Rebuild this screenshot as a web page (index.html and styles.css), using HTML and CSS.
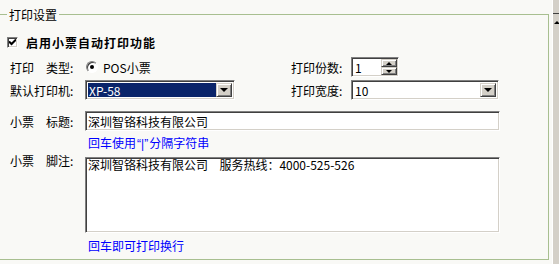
FILE: index.html
```html
<!DOCTYPE html>
<html lang="zh-CN">
<head>
  <meta charset="UTF-8">
  <meta name="viewport" content="width=device-width, initial-scale=1.0">
  <title>打印设置</title>
  <link rel="stylesheet" href="styles.css">
</head>
<body>

<div class="window">
  <fieldset class="group">
    <legend>打印设置</legend>

    <label class="check-row">
      <span class="checkbox">
        <svg width="7" height="7" viewBox="0 0 7 7"><path d="M0 2.5 L2.5 5 L7 0.5" fill="none" stroke="#000" stroke-width="2"/></svg>
      </span>
      启用小票自动打印功能
    </label>

    <div class="row row-type">
      <span class="lbl">打印&emsp;类型:</span>
      <div class="col-left">
        <span class="radio"></span>
        <span class="radio-text">POS小票</span>
      </div>
      <span class="lbl-r">打印份数:</span>
      <div class="spin sunken">
        <span class="spin-value">1</span>
        <div class="spin-btns">
          <span class="btn3d spin-btn"><i class="tri-up"></i></span>
          <span class="btn3d spin-btn"><i class="tri-down small"></i></span>
        </div>
      </div>
    </div>

    <div class="row row-printer">
      <span class="lbl">默认打印机:</span>
      <div class="col-left">
        <div class="combo combo-left sunken">
          <span class="combo-value selected">XP-58</span>
          <span class="btn3d combo-btn"><i class="tri-down"></i></span>
        </div>
      </div>
      <span class="lbl-r">打印宽度:</span>
      <div class="combo combo-right sunken">
        <span class="combo-value">10</span>
        <span class="btn3d combo-btn"><i class="tri-down"></i></span>
      </div>
    </div>

    <div class="row row-title">
      <span class="lbl">小票&emsp;标题:</span>
      <input class="text-input sunken" type="text" value="深圳智铬科技有限公司">
    </div>
    <div class="hint">回车使用<span class="quote">“|”</span>分隔字符串</div>

    <div class="row row-footer">
      <span class="lbl lbl-top">小票&emsp;脚注:</span>
      <textarea class="text-area sunken">深圳智铬科技有限公司  服务热线：4000-525-526</textarea>
    </div>
    <div class="hint">回车即可打印换行</div>
  </fieldset>

  <div class="scrollbar">
    <div class="scroll-up"><i class="tri-up"></i></div>
  </div>
</div>

</body>
</html>
```

FILE: styles.css
```css
body {
  margin: 0;
  padding: 0;
  background-color: #f9f9f6;
  font-family: "Noto Sans CJK SC", "Liberation Sans", sans-serif;
  font-size: 12px;
  color: #000;
}

.window {
  display: flex;
  height: 264px;
  padding-top: 8px;
  box-sizing: border-box;
}

.group {
  flex: none;
  width: 549px;
  height: 252px;
  margin: 0;
  padding: 0 0 7px 10px;
  box-sizing: border-box;
  border: 1px solid #a8bf90;
  border-left: none;
}

.group legend {
  margin-left: -3px;
  padding: 0 2px;
  line-height: 13px;
}

.check-row {
  display: flex;
  align-items: center;
  height: 16px;
  margin: 13px 0 0 -3px;
  font-weight: bold;
  letter-spacing: 1px;
}

.checkbox {
  display: flex;
  align-items: center;
  justify-content: center;
  width: 11px;
  height: 11px;
  margin-right: 8px;
  box-sizing: border-box;
  background-color: #fff;
  border: 1px solid;
  border-color: #808080 #fff #fff #808080;
  box-shadow: inset 1px 1px 0 #404040, inset -1px -1px 0 #d4d0c8;
}

.row {
  display: flex;
  align-items: center;
  height: 20px;
}

.row-type {
  margin-top: 7px;
}

.row-printer {
  margin-top: 3px;
}

.row-title {
  margin-top: 11px;
}

.row-footer {
  margin-top: 6px;
  height: 76px;
  align-items: flex-start;
}

.lbl {
  width: 75px;
  flex: none;
}

.lbl-top {
  margin-top: -3px;
  line-height: 14px;
}

.col-left {
  display: flex;
  align-items: center;
  width: 206px;
  flex: none;
}

.lbl-r {
  width: 60px;
  flex: none;
}

.sunken {
  box-sizing: border-box;
  background-color: #fff;
  border: 1px solid;
  border-color: #808080 #fff #fff #808080;
  box-shadow: inset 1px 1px 0 #404040, inset -1px -1px 0 #d4d0c8;
}

.btn3d {
  display: flex;
  align-items: center;
  justify-content: center;
  box-sizing: border-box;
  background-color: #d4d0c8;
  border: 1px solid;
  border-color: #d4d0c8 #404040 #404040 #d4d0c8;
  box-shadow: inset 1px 1px 0 #fff, inset -1px -1px 0 #808080;
}

.tri-down {
  width: 0;
  height: 0;
  border-left: 4px solid transparent;
  border-right: 4px solid transparent;
  border-top: 4px solid #000;
}

.tri-up {
  width: 0;
  height: 0;
  border-left: 3px solid transparent;
  border-right: 3px solid transparent;
  border-bottom: 3px solid #000;
}

.tri-down.small {
  border-left-width: 3px;
  border-right-width: 3px;
  border-top-width: 3px;
}

.radio {
  position: relative;
  width: 12px;
  height: 12px;
  margin-left: 1px;
  box-sizing: border-box;
  border-radius: 50%;
  background-color: #fff;
  border: 1px solid;
  border-color: #808080 #fff #fff #808080;
  box-shadow: inset 1px 1px 0 #404040;
}

.radio::after {
  content: "";
  position: absolute;
  left: 3px;
  top: 3px;
  width: 4px;
  height: 4px;
  border-radius: 50%;
  background-color: #000;
}

.radio-text {
  margin-left: 5px;
}

.spin {
  display: flex;
  width: 48px;
  height: 20px;
  padding: 1px;
}

.spin-value {
  flex: 1;
  padding-left: 2px;
  line-height: 17px;
}

.spin-btns {
  display: flex;
  flex-direction: column;
  width: 16px;
}

.spin-btn {
  flex: 1;
}

.combo {
  display: flex;
  align-items: stretch;
  height: 20px;
  padding: 2px;
}

.combo-left {
  width: 150px;
}

.combo-right {
  width: 148px;
}

.combo-value {
  flex: 1;
  padding-left: 1px;
  line-height: 16px;
}

.combo-value.selected {
  background-color: #0a246a;
  color: #fff;
}

.combo-btn {
  width: 16px;
}

.text-input {
  width: 415px;
  height: 20px;
  padding: 0 2px;
  font-family: inherit;
  font-size: 12px;
  outline: none;
}

.text-area {
  width: 415px;
  height: 76px;
  padding: 0 2px;
  font-family: inherit;
  font-size: 12px;
  line-height: 13px;
  word-spacing: 3px;
  resize: none;
  outline: none;
}

.hint {
  margin: 5px 0 0 78px;
  line-height: 14px;
  color: #0000ff;
}

.hint .quote {
  font-family: "Liberation Sans", sans-serif;
  padding: 0 1px;
}

.row-footer + .hint {
  margin-top: 6px;
}

.scrollbar {
  flex: 1;
  margin: -8px 0 0 3px;
  border-left: 1px solid #fff;
  background-color: #d4d0c8;
}

.scroll-up {
  height: 14px;
  padding: 4px 0 0 1px;
  box-sizing: border-box;
  border-bottom: 1px solid #404040;
}
```
